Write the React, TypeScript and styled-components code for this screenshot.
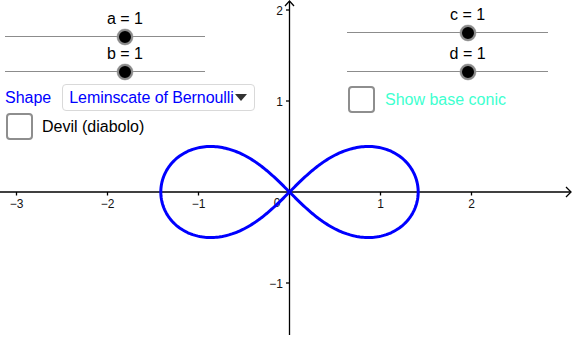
import React from "react"
import styled, { createGlobalStyle } from "styled-components"

const W = 573
const H = 337
const OX = 289.5
const OY = 192
const UNIT = 91

const GlobalStyle = createGlobalStyle`
  html, body {
    margin: 0;
    padding: 0;
    background: #ffffff;
  }
  body {
    font-family: "Liberation Sans", Arial, sans-serif;
  }
`

const Stage = styled.div`
  position: relative;
  width: ${W}px;
  height: ${H}px;
  overflow: hidden;
  background: #ffffff;
`

const Graph = styled.svg`
  display: block;
`

const ControlLayer = styled.div`
  position: absolute;
  inset: 0;
  display: flex;
  justify-content: space-between;
  align-items: flex-start;
`

const Panel = styled.div<{ $top: number; $left?: number; $right?: number }>`
  display: flex;
  flex-direction: column;
  align-items: flex-start;
  padding-top: ${(p) => p.$top}px;
  padding-left: ${(p) => p.$left ?? 0}px;
  padding-right: ${(p) => p.$right ?? 0}px;
`

const SliderBox = styled.div<{ $width: number; $gap?: number }>`
  width: ${(p) => p.$width}px;
  margin-top: ${(p) => p.$gap ?? 0}px;
`

const SliderLabel = styled.div`
  width: max-content;
  font-size: 16px;
  line-height: 18px;
  color: #000000;
  transform: translateX(-50%);
  white-space: nowrap;
`

const Track = styled.div`
  position: relative;
  height: 17px;

  &::before {
    content: "";
    position: absolute;
    left: 0;
    right: 0;
    top: 8px;
    height: 1px;
    background: #8c8c8c;
  }
`

const Knob = styled.div`
  position: absolute;
  top: 8.5px;
  width: 16px;
  height: 16px;
  box-sizing: border-box;
  border-radius: 50%;
  background: #000000;
  border: 2.5px solid #8a8a8a;
  box-shadow: 0 0 0 0.5px rgba(160, 160, 160, 0.6);
  transform: translate(-50%, -50%);
`

const ShapeRow = styled.div`
  display: flex;
  align-items: center;
  gap: 11px;
  margin-top: 4px;
`

const BlueText = styled.span`
  font-size: 16px;
  color: #0000ff;
`

const Dropdown = styled.div`
  display: flex;
  align-items: center;
  gap: 1px;
  box-sizing: border-box;
  width: 193px;
  height: 27px;
  padding-left: 6px;
  border: 1px solid #d9d9d9;
  border-radius: 4px;
  background: #ffffff;
  font-size: 16px;
  letter-spacing: -0.08px;
  color: #0000ff;
  white-space: nowrap;
`

const CheckRow = styled.label<{ $gap: number; $top: number; $color: string }>`
  display: flex;
  align-items: center;
  gap: ${(p) => p.$gap}px;
  margin-top: ${(p) => p.$top}px;
  margin-left: 1px;
  font-size: 16px;
  color: ${(p) => p.$color};
  white-space: nowrap;
`

const Box = styled.span`
  display: block;
  box-sizing: border-box;
  width: 27px;
  height: 27px;
  border: 2px solid #8e8e8e;
  border-radius: 4px;
  background: #ffffff;
`

function Slider({ name, value, fraction, width, gap }: { name: string; value: number; fraction: number; width: number; gap?: number }) {
  const pct = `${fraction * 100}%`
  return (
    <SliderBox $width={width} $gap={gap}>
      <SliderLabel style={{ marginLeft: pct }}>{`${name} = ${value}`}</SliderLabel>
      <Track>
        <Knob style={{ left: pct }} />
      </Track>
    </SliderBox>
  )
}

function lemniscatePath(): string {
  const pts: string[] = []
  const n = 400
  for (let i = 0; i <= n; i++) {
    const t = (i / n) * Math.PI * 2
    const s = Math.sin(t)
    const c = Math.cos(t)
    const d = 1 + s * s
    const x = (Math.SQRT2 * c) / d
    const y = (Math.SQRT2 * s * c) / d
    pts.push(`${(OX + x * UNIT).toFixed(2)},${(OY - y * UNIT).toFixed(2)}`)
  }
  return "M" + pts.join(" L")
}

function Axes() {
  const xTicks = [-3, -2, -1, 1, 2]
  const yTicks = [2, 1, -1]
  return (
    <Graph width={W} height={H} viewBox={`0 0 ${W} ${H}`}>
      <g stroke="#000" strokeWidth={1.3} fill="none">
        <line x1={0} y1={OY} x2={570} y2={OY} />
        <line x1={OX} y1={1} x2={OX} y2={335} />
        <polyline points={`566,187 571,${OY} 566,197`} />
        <polyline points={`${OX - 4.5},6 ${OX},1 ${OX + 4.5},6`} />
        {xTicks.map((v) => (
          <line key={`xt${v}`} x1={OX + v * UNIT} y1={OY} x2={OX + v * UNIT} y2={OY + 3.5} />
        ))}
        {yTicks.map((v) => (
          <line key={`yt${v}`} x1={OX - 3.5} y1={OY - v * UNIT} x2={OX} y2={OY - v * UNIT} />
        ))}
      </g>
      <g fill="#111" fontSize={12} fontFamily="'Liberation Sans', Arial, sans-serif">
        {xTicks.map((v) => (
          <text key={`xl${v}`} x={OX + v * UNIT} y={208} textAnchor="middle">
            {v < 0 ? `\u2212${-v}` : v}
          </text>
        ))}
        <text x={277} y={207} textAnchor="middle">0</text>
        {yTicks.map((v) => (
          <text key={`yl${v}`} x={283} y={OY - v * UNIT + 5} textAnchor="end">
            {v < 0 ? `\u2212${-v}` : v}
          </text>
        ))}
      </g>
      <path d={lemniscatePath()} stroke="#0000ff" strokeWidth={3} fill="none" strokeLinejoin="round" />
    </Graph>
  )
}

export default function App() {
  return (
    <>
      <GlobalStyle />
      <Stage>
        <Axes />
        <ControlLayer>
          <Panel $top={10} $left={5}>
            <Slider name="a" value={1} fraction={0.6} width={200} />
            <Slider name="b" value={1} fraction={0.6} width={200} />
            <ShapeRow>
              <BlueText>Shape</BlueText>
              <Dropdown>
                <span>Leminscate of Bernoulli</span>
                <svg width="12" height="7" viewBox="0 0 12 7">
                  <polygon points="0,0 12,0 6,7" fill="#333" />
                </svg>
              </Dropdown>
            </ShapeRow>
            <CheckRow $gap={9} $top={2} $color="#000000">
              <Box />
              Devil (diabolo)
            </CheckRow>
          </Panel>
          <Panel $top={6} $right={25}>
            <Slider name="c" value={1} fraction={0.6} width={201} />
            <Slider name="d" value={1} fraction={0.6} width={201} gap={4} />
            <CheckRow $gap={10} $top={6} $color="#40ffd0">
              <Box />
              Show base conic
            </CheckRow>
          </Panel>
        </ControlLayer>
      </Stage>
    </>
  )
}
